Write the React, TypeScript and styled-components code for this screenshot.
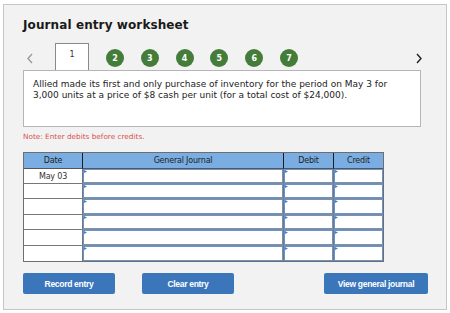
import React from "react";
import styled, { createGlobalStyle } from "styled-components";

const GlobalStyle = createGlobalStyle`
  html, body { margin: 0; padding: 0; background: #ffffff; }
  body { font-family: "DejaVu Sans", Verdana, sans-serif; }
  * { box-sizing: border-box; }
`;

const Panel = styled.div`
  margin: 4px 0 0 3px;
  width: 444px;
  height: 306px;
  border: 1px solid #c6c6c6;
  background: #f2f2f2;
  padding: 0 0 0 19px;
  display: flex;
  flex-direction: column;
`;

const Title = styled.h1`
  margin: 13px 0 0 0;
  font-family: "DejaVu Sans", Verdana, sans-serif;
  font-weight: bold;
  font-size: 12px;
  line-height: 15px;
  color: #1a1a1a;
  letter-spacing: 0.1px;
`;

const Nav = styled.div`
  display: flex;
  align-items: flex-end;
  height: 27px;
  margin-top: 10px;
  margin-right: 20px;
`;

const Arrow = styled.div<{ $muted?: boolean }>`
  width: 14px;
  height: 18px;
  align-self: center;
  margin-top: 3px;
  display: flex;
  align-items: center;
  justify-content: center;
  color: ${(p) => (p.$muted ? "#a0a0a0" : "#222")};
`;

const Tab = styled.div`
  margin-left: 18px;
  width: 34px;
  height: 27px;
  background: #ffffff;
  border: 1px solid #8a8a8a;
  border-bottom: none;
  display: flex;
  justify-content: center;
  padding-top: 6px;
  font-size: 8px;
  color: #333;
`;

const Steps = styled.div`
  display: flex;
  gap: 16.8px;
  margin-left: 17px;
  align-self: center;
  margin-top: 3px;
`;

const Step = styled.div`
  width: 18px;
  height: 18px;
  border-radius: 50%;
  background: #447d3a;
  color: #fff;
  font-family: "DejaVu Sans", Verdana, sans-serif;
  font-weight: bold;
  font-size: 8px;
  display: flex;
  align-items: center;
  justify-content: center;
`;

const Spacer = styled.div`
  flex: 1;
`;

const Prompt = styled.div`
  width: 398px;
  height: 57px;
  background: #fff;
  border: 1px solid #b5b5b5;
  padding: 8px 9px;
  font-family: "DejaVu Sans", Verdana, sans-serif;
  font-size: 9px;
  line-height: 11px;
  color: #222;
`;

const Note = styled.div`
  margin-top: 5px;
  font-family: "DejaVu Sans", Verdana, sans-serif;
  font-size: 7.3px;
  line-height: 9px;
  color: #d9534f;
`;

const Table = styled.div`
  margin-top: 11px;
  width: 361px;
  display: grid;
  grid-template-columns: 58px 201px 50px 50px;
  grid-template-rows: 16px 15px 15px 16px 15px 16px 15px;
  border: 1px solid #6e6e6e;
  background: #fff;
`;

const HeadCell = styled.div<{ $first?: boolean }>`
  background: #7aaee3;
  border-left: ${(p) => (p.$first ? "none" : "1px solid #1c1c1c")};
  border-bottom: 1px solid #555;
  display: flex;
  align-items: center;
  justify-content: center;
  font-family: "DejaVu Sans", Verdana, sans-serif;
  font-size: 8px;
  color: #222;
  letter-spacing: -0.2px;
`;

const DateCell = styled.div<{ $last?: boolean }>`
  border-bottom: ${(p) => (p.$last ? "none" : "1px solid #777")};
  display: flex;
  align-items: center;
  justify-content: center;
  font-family: "DejaVu Sans", Verdana, sans-serif;
  font-size: 8px;
  color: #333;
  letter-spacing: -0.2px;
`;

const InputCell = styled.div<{ $last?: boolean }>`
  position: relative;
  border-left: 1px solid #777;
  border-bottom: ${(p) => (p.$last ? "none" : "1px solid #8a8a8a")};
  background: #fff;
  &::before {
    content: "";
    position: absolute;
    inset: 0;
    border: 1px solid #6b93cb;
  }
  &::after {
    content: "";
    position: absolute;
    left: 1px;
    top: 1px;
    width: 3px;
    height: 3px;
    background: #3d7fd0;
    clip-path: polygon(0 0, 100% 50%, 0 100%);
  }
`;

const Buttons = styled.div`
  display: flex;
  margin-top: 11px;
  margin-right: 18px;
`;

const Button = styled.button<{ $w: number; $ml?: number }>`
  width: ${(p) => p.$w}px;
  height: 21px;
  margin-left: ${(p) => p.$ml ?? 0}px;
  background: #3b76bb;
  border: none;
  border-radius: 2px;
  color: #fff;
  font-family: "Liberation Sans", Arial, sans-serif;
  font-weight: bold;
  font-size: 8.5px;
  letter-spacing: -0.3px;
  padding: 0;
`;

const ChevronLeft = () => (
  <svg width="8" height="11" viewBox="0 0 8 11">
    <path d="M6 1 L2 5.5 L6 10" stroke="#9a9a9a" strokeWidth="1.4" fill="none" />
  </svg>
);

const ChevronRight = () => (
  <svg width="8" height="11" viewBox="0 0 8 11">
    <path d="M2 1 L6 5.5 L2 10" stroke="#222" strokeWidth="1.4" fill="none" />
  </svg>
);

const rows = ["May 03", "", "", "", "", ""];

export default function App() {
  return (
    <>
      <GlobalStyle />
      <Panel>
        <Title>Journal entry worksheet</Title>
        <Nav>
          <Arrow $muted>
            <ChevronLeft />
          </Arrow>
          <Tab>1</Tab>
          <Steps>
            {[2, 3, 4, 5, 6, 7].map((n) => (
              <Step key={n}>{n}</Step>
            ))}
          </Steps>
          <Spacer />
          <Arrow>
            <ChevronRight />
          </Arrow>
        </Nav>
        <Prompt>
          Allied made its first and only purchase of inventory for the period on May 3 for 3,000 units at a price
          of $8 cash per unit (for a total cost of $24,000).
        </Prompt>
        <Note>Note: Enter debits before credits.</Note>
        <Table>
          <HeadCell $first>Date</HeadCell>
          <HeadCell>General Journal</HeadCell>
          <HeadCell>Debit</HeadCell>
          <HeadCell>Credit</HeadCell>
          {rows.map((d, i) => {
            const last = i === rows.length - 1;
            return (
              <React.Fragment key={i}>
                <DateCell $last={last}>{d}</DateCell>
                <InputCell $last={last} />
                <InputCell $last={last} />
                <InputCell $last={last} />
              </React.Fragment>
            );
          })}
        </Table>
        <Buttons>
          <Button $w={92}>Record entry</Button>
          <Button $w={92} $ml={27}>Clear entry</Button>
          <Spacer />
          <Button $w={104}>View general journal</Button>
        </Buttons>
      </Panel>
    </>
  );
}
